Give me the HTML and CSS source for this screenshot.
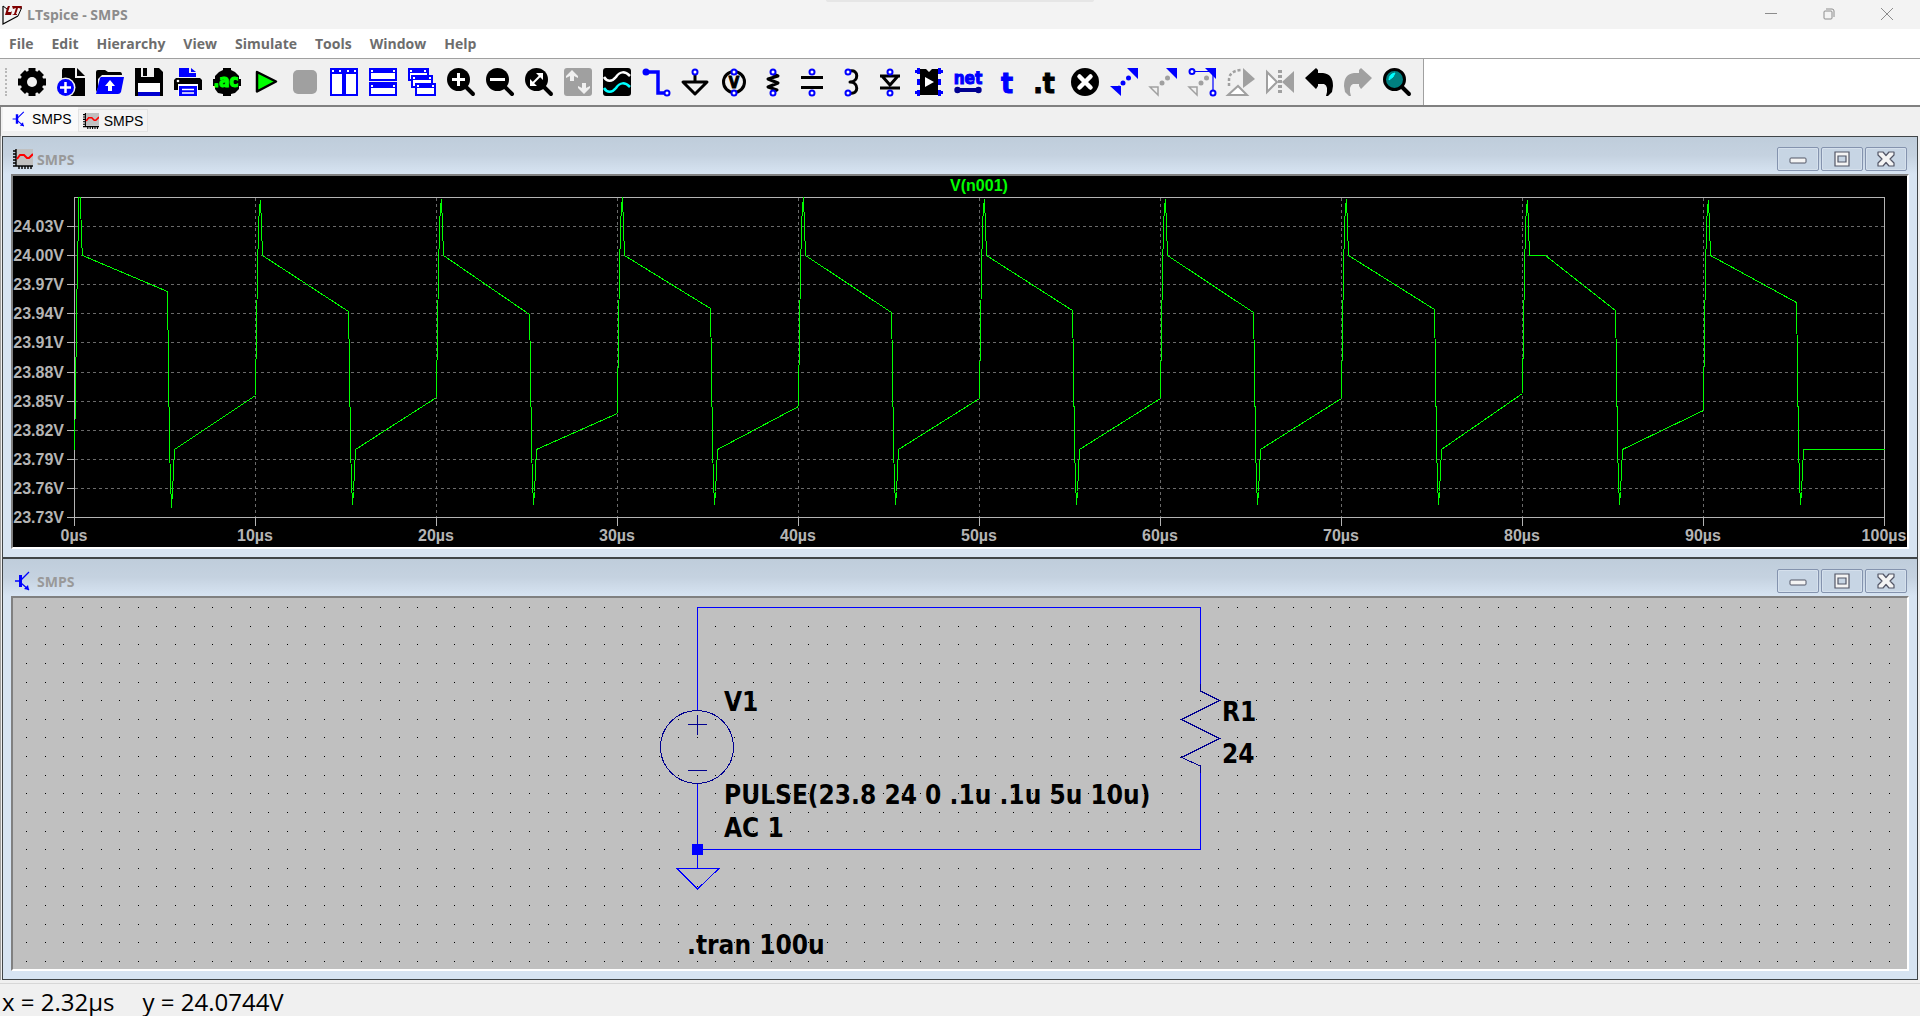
FILE: index.html
```html
<!DOCTYPE html>
<html lang="en">
<head>
    <meta charset="UTF-8">
    <meta name="viewport" content="width=device-width, initial-scale=1.0">
    <title>LTspice - SMPS</title>
    <link rel="stylesheet" href="styles.css">
</head>

<body>
    <!-- shared small icons -->
    <svg class="defs" width="0" height="0">
        <symbol id="icon-schematic" viewBox="0 0 20 20">
            <path d="M2 10H8M8 9L16 1M8 12L16 19" fill="none" stroke="#0000ff" stroke-width="1.3"/>
            <path d="M6 4h3v12h-3zM16 19l-5-1 4-4z" fill="#0000ff"/>
        </symbol>
        <symbol id="icon-plot" viewBox="0 0 20 20">
            <path d="M3 0H20V16H3z" fill="#c0c0c0"/>
            <path d="M3 0V17H20M0 2H3M0 5H3M0 8H3M0 11H3M0 14H3M0 17H3M6 17V20M9 17V20M12 17V20M15 17V20M18 17V20" fill="none" stroke="#000" stroke-width="1.4"/>
            <path d="M4 10L7 6H11L14 9H16L20 5" fill="none" stroke="#ff0000" stroke-width="2"/>
        </symbol>
        <symbol id="icon-min" viewBox="0 0 18 16">
            <rect x="1" y="7" width="16" height="5" rx="1" fill="#f4f4f4" stroke="#535666"/>
        </symbol>
        <symbol id="icon-max" viewBox="0 0 18 16">
            <path d="M2 1H16V15H2zM5 5V11H13V5z" fill="#f4f4f4" fill-rule="evenodd" stroke="#535666" stroke-width="1.2"/>
        </symbol>
        <symbol id="icon-close" viewBox="0 0 18 16">
            <path d="M1 1H6L9 4.500L12 1H17V4L13 8L17 12V15H12L9 11.500L6 15H1V12L5 8L1 4z" fill="#f4f4f4" stroke="#535666" stroke-width="1.2" stroke-linejoin="round"/>
        </symbol>
    </svg>

    <div class="app">
        <header class="title-bar">
            <svg class="logo" viewBox="0 0 20 20">
                <path d="M1 1V19L16 11" fill="none" stroke="#000" stroke-width="1.2"/>
                <path d="M1 1L5 4M16 11L20 2" fill="none" stroke="#000"/>
                <path d="M6 1H8L6 7H9L10 6L9 10H3L5 3zM10 1H20L19 4L17 3H16L14 9H15V10H10L12 9L14 3L11 4z" fill="#800000"/>
            </svg>
            <h1>LTspice - SMPS</h1>
            <div class="caption-buttons">
                <button aria-label="Minimize"><svg viewBox="0 0 12 12"><path d="M0 5.500H12"/></svg></button>
                <button aria-label="Restore"><svg viewBox="0 0 12 12"><rect x="1" y="3" width="8" height="8" rx="1"/><path d="M3 1H9Q11 1 11 3V9"/></svg></button>
                <button aria-label="Close"><svg viewBox="0 0 12 12"><path d="M0 0L12 12M12 0L0 12"/></svg></button>
            </div>
        </header>

        <nav class="menu-bar">
            <button>File</button>
            <button>Edit</button>
            <button>Hierarchy</button>
            <button>View</button>
            <button>Simulate</button>
            <button>Tools</button>
            <button>Window</button>
            <button>Help</button>
        </nav>

        <div class="toolbar-row">
            <div class="toolbar">
                <button aria-label="Settings"><svg viewBox="0 0 28 28">
                    <circle cx="14" cy="14" r="11.500"/>
                    <path d="M14 0V28M0 14H28M4.500 4.500L23.500 23.500M23.500 4.500L4.500 23.500" stroke="#000" stroke-width="7"/>
                    <circle cx="14" cy="14" r="5" fill="#f0f0f0"/>
                </svg></button>
                <button aria-label="New Schematic"><svg viewBox="0 0 28 28">
                    <path d="M6 0H18V10H28V28H5V2z"/><path d="M20 0L28 8H20z"/>
                    <circle cx="8.500" cy="19.500" r="10" fill="#f0f0f0"/><circle cx="8.500" cy="19.500" r="8.500" fill="#0000ff"/>
                    <path d="M8.500 14V25M3 19.500H14" stroke="#fff" stroke-width="2.500"/>
                </svg></button>
                <button aria-label="Open"><svg viewBox="0 0 28 28">
                    <path d="M0 4Q0 2 2 2H9L12 4H24Q26 4 26 7H6L2 11V20L0 24z"/>
                    <path d="M5 9H28L25 24Q24 26 22 26H0L4 10z" fill="#0000ff"/>
                    <path d="M14 12L19 18H16V23H12V18H9z" fill="#fff"/>
                </svg></button>
                <button aria-label="Save"><svg viewBox="0 0 28 28">
                    <path d="M0 0H24L28 4V28H0z"/>
                    <path d="M6 0H8V9H6zM12 0H19V9H8V8H12z" fill="#f0f0f0"/>
                    <path d="M3 15H25V25H3z" fill="#fff"/><path d="M3 24H25V28H3z" fill="#0000d0"/>
                </svg></button>
                <button aria-label="Print"><svg viewBox="0 0 28 28">
                    <path d="M5 0H15V5H22V9H5z" fill="#0000ff"/><path d="M17 0L22 4H17z" fill="#0000ff"/>
                    <path d="M2 10H26L28 12V22H0V12z"/><circle cx="4" cy="13" r="1.300" fill="#fff"/>
                    <path d="M4 16H24V28H4z" fill="#fff"/><path d="M5 18H23V28H5z" fill="#0000ff"/>
                    <path d="M8 21.500H20M8 25H20" stroke="#fff" stroke-width="1.500"/>
                </svg></button>
                <button aria-label="AC analysis"><svg viewBox="0 0 28 28">
                    <path d="M10 0H18V2L22 4L26 8V11H28V18H26V21L22 25L18 26V28H10V26L5 25L2 21V18H0V11H2V8L6 4L10 2z"/>
                    <text x="13" y="19" class="glyph-text" font-size="17" fill="#00ff00" stroke="#00ff00">.ac</text>
                </svg></button>
                <button aria-label="Run"><svg viewBox="0 0 28 28">
                    <path d="M5 4L24 13.500L5 23.500z" fill="#00ff00" stroke="#000" stroke-width="2.500" stroke-linejoin="round"/>
                </svg></button>
                <button aria-label="Stop" disabled><svg viewBox="0 0 28 28">
                    <rect x="2" y="2" width="24" height="24" rx="5" fill="#a0a0a0"/>
                </svg></button>
                <button aria-label="Tile Vertically"><svg viewBox="0 0 28 28">
                    <path d="M1 1H13V27H1zM15 1H27V27H15z" fill="#fff" stroke="#0000ff" stroke-width="2"/>
                    <path d="M0 0H13V6H0zM15 0H28V6H15z" fill="#0000ff"/>
                    <path d="M2 3H4M9 3H11M17 3H19M24 3H26" stroke="#fff" stroke-width="2"/>
                </svg></button>
                <button aria-label="Tile Horizontally"><svg viewBox="0 0 28 28">
                    <path d="M1 1H27V12H1zM1 15H27V27H1z" fill="#fff" stroke="#0000ff" stroke-width="2"/>
                    <path d="M0 0H28V5H0zM0 15H28V20H0z" fill="#0000ff"/>
                    <path d="M2 3H4M24 3H26M2 18H4M24 18H26" stroke="#fff" stroke-width="2"/>
                </svg></button>
                <button aria-label="Cascade"><svg viewBox="0 0 28 28">
                    <path d="M1 1H20V12H1z" fill="#fff" stroke="#0000ff" stroke-width="2"/><path d="M0 0H21V5H0z" fill="#0000ff"/>
                    <path d="M4 8H24V19H4z" fill="#fff" stroke="#0000ff" stroke-width="2"/><path d="M3 7H25V12H3z" fill="#0000ff"/>
                    <path d="M8 16H27V27H8z" fill="#fff" stroke="#0000ff" stroke-width="2"/><path d="M7 15H28V20H7z" fill="#0000ff"/>
                    <path d="M2 3H4M16 3H18M5 10H7M21 10H23M9 18H11M24 18H26" stroke="#fff" stroke-width="2"/>
                </svg></button>
                <button aria-label="Zoom in"><svg viewBox="0 0 28 28">
                    <circle cx="11.500" cy="11.500" r="11.500"/><path d="M18 18L26 26" class="handle"/>
                    <path d="M11.500 5V18M5 11.500H18" stroke="#fff" stroke-width="3"/>
                </svg></button>
                <button aria-label="Zoom out"><svg viewBox="0 0 28 28">
                    <circle cx="11.500" cy="11.500" r="11.500"/><path d="M18 18L26 26" class="handle"/>
                    <path d="M4 11.500H19" stroke="#fff" stroke-width="3"/>
                </svg></button>
                <button aria-label="Zoom to fit"><svg viewBox="0 0 28 28">
                    <circle cx="11.500" cy="11.500" r="11.500"/><path d="M18 18L26 26" class="handle"/>
                    <path d="M7 16L16 7" stroke="#fff" stroke-width="2"/>
                    <path d="M11 5H18V12zM5 11V18H12z" fill="#fff"/>
                </svg></button>
                <button aria-label="Autorange" disabled><svg viewBox="0 0 28 28">
                    <rect width="28" height="28" rx="3" fill="#a0a0a0"/>
                    <path d="M8 2L14 8V10L10 8V13H6V8L2 10V8zM20 26L14 20V18L18 20V15H22V20L26 18V20z" fill="#f0f0f0"/>
                </svg></button>
                <button aria-label="Plot traces"><svg viewBox="0 0 28 28">
                    <rect width="28" height="28" rx="3"/>
                    <path d="M1 9C4 14 9 14 13 9C17 3 22 3 27 8" fill="none" stroke="#fff" stroke-width="2.500"/>
                    <path d="M1 20C4 25 9 25 13 20C17 14 22 14 27 19" fill="none" stroke="#00ffff" stroke-width="2.500"/>
                </svg></button>
                <button aria-label="Wire"><svg viewBox="0 0 28 28">
                    <path d="M4 4H16V25H24" fill="none" stroke="#0000ff" stroke-width="3.500"/>
                    <circle cx="4" cy="4" r="3.500" fill="#0000ff"/><circle cx="25" cy="25" r="2.500" class="pin"/>
                </svg></button>
                <button aria-label="Ground"><svg viewBox="0 0 28 28">
                    <path d="M14 5V14M2 14H26L14 26z" class="stroke-black"/><circle cx="14" cy="4" r="2.500" class="pin"/>
                </svg></button>
                <button aria-label="Voltage source"><svg viewBox="0 0 28 28">
                    <circle cx="14" cy="14" r="10.500" class="stroke-black"/>
                    <text x="14" y="20" class="glyph-text" font-size="15" stroke="#000">V</text>
                    <circle cx="14" cy="4" r="2.500" class="pin"/><circle cx="14" cy="25" r="2.500" class="pin"/>
                </svg></button>
                <button aria-label="Resistor"><svg viewBox="0 0 28 28">
                    <path d="M14 6L19 8L9 11L19 15L9 19L18 22L14 24" class="stroke-black"/>
                    <circle cx="14" cy="4" r="2.500" class="pin"/><circle cx="14" cy="25" r="2.500" class="pin"/>
                </svg></button>
                <button aria-label="Capacitor"><svg viewBox="0 0 28 28">
                    <path d="M3 9.500H25M3 19.500H25" class="stroke-black"/>
                    <circle cx="14" cy="4" r="2.500" class="pin"/><circle cx="14" cy="25" r="2.500" class="pin"/>
                </svg></button>
                <button aria-label="Inductor"><svg viewBox="0 0 28 28">
                    <path d="M13 3C22 1 22 14 13 14C22 14 22 27 13 25" class="stroke-black"/>
                    <circle cx="11" cy="4" r="2.500" class="pin"/><circle cx="11" cy="25" r="2.500" class="pin"/>
                </svg></button>
                <button aria-label="Diode"><svg viewBox="0 0 28 28">
                    <path d="M4 8H24M6 8L14 17L22 8M4 20H24" class="stroke-black"/>
                    <circle cx="14" cy="4" r="2.500" class="pin"/><circle cx="14" cy="25" r="2.500" class="pin"/>
                </svg></button>
                <button aria-label="Component"><svg viewBox="0 0 28 28">
                    <path d="M2 0H5V6H2zM0 2H5V5H0zM2 11H5V17H2zM2 22H5V28H2zM0 23H5V26H0zM23 0H26V6H23zM23 2H28V5H23zM23 11H26V17H23zM23 22H26V28H23zM23 23H28V26H23z" fill="#0000ff"/>
                    <path d="M5 1H11L14 4L17 1H23V27H5z"/><path d="M10 9L19 14L10 19z" fill="#fff"/>
                </svg></button>
                <button aria-label="Net name"><svg viewBox="0 0 28 28">
                    <text x="14" y="16" class="glyph-text" font-size="17" fill="#0000ff" stroke="#0000ff">net</text>
                    <path d="M3 22H25" stroke="#000090" stroke-width="4"/>
                    <circle cx="3.500" cy="22" r="3.200" fill="#000090"/><circle cx="24.500" cy="22" r="3.200" fill="#000090"/>
                </svg></button>
                <button aria-label="Text"><svg viewBox="0 0 28 28">
                    <text x="14" y="25" class="glyph-text" font-size="28" fill="#0000ff" stroke="#0000ff">t</text>
                </svg></button>
                <button aria-label="SPICE directive"><svg viewBox="0 0 28 28">
                    <text x="12" y="25" class="glyph-text" font-size="28" stroke="#000">.t</text>
                </svg></button>
                <button aria-label="Delete"><svg viewBox="0 0 28 28">
                    <circle cx="14" cy="14" r="14"/><path d="M8.500 8.500L19.500 19.500M19.500 8.500L8.500 19.500" stroke="#fff" stroke-width="4.500" stroke-linecap="round"/>
                </svg></button>
                <button aria-label="Move"><svg viewBox="0 0 28 28" fill="#0000ff">
                    <path d="M17 0H28V11zM0 18H11V28z"/>
                    <circle cx="9" cy="19" r="1.500"/><circle cx="13" cy="15" r="2.500"/><circle cx="18.500" cy="10" r="2.500"/>
                </svg></button>
                <button aria-label="Duplicate"><svg viewBox="0 0 28 28">
                    <path d="M17 0H28V11z" fill="#0000ff"/><path d="M1 19H9V27z" fill="none" stroke="#a0a0a0" stroke-width="1.500"/>
                    <g fill="#a0a0a0"><circle cx="13" cy="15" r="2.500"/><circle cx="18.500" cy="10" r="2.500"/></g>
                </svg></button>
                <button aria-label="Stretch"><svg viewBox="0 0 28 28">
                    <path d="M17 0H28V11z" fill="#0000ff"/><path d="M1 19H9V27z" fill="none" stroke="#a0a0a0" stroke-width="1.500"/>
                    <g fill="#a0a0a0"><circle cx="13" cy="15" r="2.500"/><circle cx="18.500" cy="10" r="2.500"/></g>
                    <path d="M4 3.500H25V25" fill="none" stroke="#0000ff" stroke-width="1.200"/>
                    <circle cx="4" cy="3.500" r="2.500" class="pin"/><circle cx="25" cy="25" r="2.500" class="pin"/>
                </svg></button>
                <button aria-label="Rotate" disabled><svg viewBox="0 0 28 28">
                    <path d="M16 0L28 11L16 20z" fill="#a0a0a0"/>
                    <path d="M1 27H20L11 18z" fill="#fff" stroke="#a0a0a0" stroke-width="2"/>
                    <path d="M2 18V12Q2 3 14 2" fill="none" stroke="#a0a0a0" stroke-width="2.500" stroke-dasharray="3 2"/>
                </svg></button>
                <button aria-label="Mirror" disabled><svg viewBox="0 0 28 28">
                    <path d="M1 4V24L11 14z" fill="#fff" stroke="#a0a0a0" stroke-width="2"/>
                    <path d="M28 3V25L16 14z" fill="#a0a0a0"/><path d="M14 2V27" stroke="#a0a0a0" stroke-width="4" stroke-dasharray="3 2"/>
                </svg></button>
                <button aria-label="Undo"><svg viewBox="0 0 28 28">
                    <path d="M0 10L11 0L13 2V5H18Q28 6 28 18L27 24L23 28H21Q24 18 19 16H13V18L11 21z"/>
                </svg></button>
                <button aria-label="Redo" disabled><svg viewBox="0 0 28 28">
                    <path d="M28 10L17 0L15 2V5H10Q0 6 0 18L1 24L5 28H7Q4 18 9 16H15V18L17 21z" fill="#a0a0a0"/>
                </svg></button>
                <button aria-label="Find"><svg viewBox="0 0 28 28">
                    <circle cx="11.500" cy="11.500" r="10" fill="#008080" stroke="#000" stroke-width="3"/><path d="M19 19L26 26" class="handle"/>
                    <path d="M6 12Q6 6 12 5L10 9z" fill="#00ffff" stroke="#00ffff"/>
                </svg></button>
            </div>
        </div>

        <div class="tabs">
            <button class="tab active"><svg viewBox="0 0 20 20"><use href="#icon-schematic"/></svg>SMPS</button>
            <button class="tab"><svg viewBox="0 0 20 20"><use href="#icon-plot"/></svg>SMPS</button>
        </div>

        <main class="workspace">
            <section class="window">
                <div class="window-title">
                    <svg class="window-icon" viewBox="0 0 20 20"><use href="#icon-plot"/></svg>
                    <h2>SMPS</h2>
                    <div class="window-buttons">
                        <button aria-label="Minimize"><svg><use href="#icon-min"/></svg></button>
                        <button aria-label="Maximize"><svg><use href="#icon-max"/></svg></button>
                        <button aria-label="Close"><svg><use href="#icon-close"/></svg></button>
                    </div>
                </div>
                <div class="client">
                    <svg id="plot" class="plot" viewBox="0 1 1894 371">
                        <text class="trace-name" x="966" y="16">V(n001)</text>
                    </svg>
                </div>
            </section>

            <section class="window">
                <div class="window-title">
                    <svg class="window-icon" viewBox="0 0 20 20"><use href="#icon-schematic"/></svg>
                    <h2>SMPS</h2>
                    <div class="window-buttons">
                        <button aria-label="Minimize"><svg><use href="#icon-min"/></svg></button>
                        <button aria-label="Maximize"><svg><use href="#icon-max"/></svg></button>
                        <button aria-label="Close"><svg><use href="#icon-close"/></svg></button>
                    </div>
                </div>
                <div class="client">
                    <svg id="schematic" class="schematic" viewBox="0 1 1894 371">
                        <path id="grid" class="grid"/>
                        <!-- wires -->
                        <path class="wire" d="M684.500 113V10.500H1187.500V94M1187.500 169V252.500H684.500V187M684.500 252V271.500M664 271.500H706L684.500 292z"/>
                        <path d="M679 247H690V258H679z" fill="#0000ff"/>
                        <!-- V1 -->
                        <circle class="part" cx="684" cy="150" r="36.500"/>
                        <path class="part" d="M675 127.500H694M684.500 118V138M675 173.500H694"/>
                        <!-- R1 -->
                        <path class="part" d="M1187.500 87V94L1206.500 103.500L1168.500 122.500L1206.500 141.500L1168.500 160.500L1187.500 169V176"/>
                        <text x="711" y="114">V1</text>
                        <text x="711" y="207">PULSE(23.8 24 0 .1u .1u 5u 10u)</text>
                        <text x="711" y="240">AC 1</text>
                        <text x="1209" y="124">R1</text>
                        <text x="1209" y="166">24</text>
                        <text x="674" y="357">.tran 100u</text>
                    </svg>
                </div>
            </section>
        </main>

        <footer class="status-bar">
            <span>x = 2.32µs</span>
            <span>y = 24.0744V</span>
        </footer>
    </div>

    <script>
        const SVG = 'http://www.w3.org/2000/svg';
        const plot = document.getElementById('plot');

        // plot area inside the waveform pane
        const area = { left: 61, right: 1871, top: 22, bottom: 342 };

        function add(name, attrs, text) {
            const el = document.createElementNS(SVG, name);
            for (const key in attrs) el.setAttribute(key, attrs[key]);
            if (text) el.textContent = text;
            plot.appendChild(el);
        }

        function line(cls, x1, y1, x2, y2) {
            add('path', { class: cls, d: `M${x1 + 0.5} ${y1 + 0.5}L${x2 + 0.5} ${y2 + 0.5}` });
        }

        for (let i = 0; i <= 10; i++) {
            const y = Math.round(area.bottom - i * 29.1);
            if (i > 0) line('grid-line', area.left, y, area.right, y);
            line('axis', area.left - 8, y, area.left, y);
            add('text', { class: 'y-label', x: 51, y: y + 6 }, (23.73 + i * 0.03).toFixed(2) + 'V');
        }

        for (let i = 0; i <= 10; i++) {
            const x = area.left + i * 181;
            if (i > 0 && i < 10) line('grid-line', x, area.top, x, area.bottom);
            line('axis', x, area.bottom, x, area.bottom + 8);
            add('text', { class: 'x-label', x: x, y: area.bottom + 24 }, i * 10 + 'µs');
        }

        add('rect', { class: 'axis', x: area.left + 0.5, y: area.top + 0.5, width: area.right - area.left, height: area.bottom - area.top });

        // where each half period and each spike ends, in pane units
        const highEnd = [116, 136, 139, 133, 137, 135, 137, 134, 135, 127];
        const lowEnd = [220, 222, 238, 231, 223, 223, 223, 218, 235];
        const peak = [25, 24, 22, 22, 24, 24, 24, 25, 25];
        const points = [[61, 275], [62, 215], [63, 150], [64, 80], [65, 52], [65, 22], [67, 22], [68, 65], [69, 80]];
        for (let i = 0; i < 10; i++) {
            const x = area.left + i * 181;
            points.push([x + 93, highEnd[i]], [x + 94, 190], [x + 95, 270], [x + 96, 305], [x + 97, i === 0 ? 332 : 329], [x + 98, 316], [x + 100, 274]);
            if (i < 9) {
                const n = x + 181;
                points.push([n, lowEnd[i]], [n + 1, 150], [n + 2, 100], [n + 3, 50], [n + 4, 32], [n + 5, peak[i]], [n + 6, 50], [n + 7, 80]);
                if (i === 7) points.push([n + 23, 80]);
            }
        }
        points.push([1871, 274]);
        add('polyline', { class: 'trace', points: points.map(([x, y]) => `${x + 0.5},${y + 0.5}`).join(' ') });

        // schematic grid dots
        let dots = '';
        for (let row = 0; row < 20; row++) {
            for (let col = 0; col <= 100; col++) {
                dots += `M${Math.round(13 + col * 18.63)} ${Math.round(10 + row * 18.63)}h1v1h-1z`;
            }
        }
        document.getElementById('grid').setAttribute('d', dots);
    </script>
</body>
</html>
```
FILE: styles.css
```css
body {
    margin: 0;
    background: #f0f0f0;
    font-family: "Open Sans", "Noto Sans", sans-serif;
    color: #000;
}

button {
    margin: 0;
    padding: 0;
    border: none;
    background: none;
    font-family: inherit;
}

.defs {
    position: absolute;
}

.app {
    display: flex;
    flex-direction: column;
    min-height: 100vh;
}

/* main title bar */
.title-bar {
    position: relative;
    display: flex;
    align-items: center;
    height: 29px;
    padding: 0 4px 0 2px;
    background: #f3f3f3;
}

/* edge of the system snap bar hanging over the title bar */
.title-bar::after {
    content: "";
    position: absolute;
    top: 0;
    left: 43%;
    width: 14%;
    height: 2px;
    border-radius: 0 0 4px 4px;
    background: #e6e6e6;
}

.logo {
    width: 20px;
    height: 20px;
}

.title-bar h1 {
    flex: 1;
    margin: 0 0 0 5px;
    font-size: 14px;
    font-weight: 700;
    color: #8c8c8c;
}

.caption-buttons {
    display: flex;
}

.caption-buttons button {
    width: 58px;
    height: 28px;
}

.caption-buttons svg {
    width: 12px;
    height: 12px;
    fill: none;
    stroke: #8c8c8c;
    overflow: visible;
}

/* menu */
.menu-bar {
    display: flex;
    height: 29px;
    background: #fff;
    border-bottom: 1px solid #a0a0a0;
}

.menu-bar button {
    padding: 0 9px;
    font-size: 14px;
    font-weight: 700;
    color: #6d6d6d;
}

/* toolbar */
.toolbar-row {
    display: flex;
    background: #fff;
    border-bottom: 2px solid #808080;
}

.toolbar {
    display: flex;
    gap: 11px;
    padding: 9px 12px 9px 12px;
    background: #f0f0f0;
    border-right: 1px solid #a0a0a0;
}

.toolbar::before {
    content: "";
    width: 0;
    margin-left: -7px;
    border-left: 2px dotted #b8b8b8;
}

.toolbar button {
    width: 28px;
    height: 28px;
}

.toolbar svg {
    display: block;
    width: 28px;
    height: 28px;
    overflow: visible;
}

.handle {
    stroke: #000;
    stroke-width: 4;
    stroke-linecap: round;
}

.pin {
    fill: #fff;
    stroke: #0000ff;
    stroke-width: 2;
}

.stroke-black {
    fill: none;
    stroke: #000;
    stroke-width: 3;
    stroke-linejoin: round;
}

.glyph-text {
    font-family: "DejaVu Sans Condensed", "DejaVu Sans", sans-serif;
    font-weight: 700;
    text-anchor: middle;
}

/* document tabs */
.tabs {
    display: flex;
    align-items: flex-start;
    height: 29px;
    padding-left: 2px;
    border-left: 1px solid #808080;
    box-sizing: border-box;
}

.tab {
    display: flex;
    align-items: center;
    gap: 5px;
    height: 23px;
    margin-top: 2px;
    padding: 0 4px;
    border: 1px solid #e3e3e3;
    font-family: "Liberation Sans", Arial, sans-serif;
    font-size: 14px;
    background: #f4f4f4;
}

.tab.active {
    height: 24px;
    margin-top: 0;
    padding: 0 5px 0 7px;
    border-color: #fafafa;
    background: #fafafa;
}

.tab svg {
    width: 16px;
    height: 16px;
}

/* child windows */
.workspace {
    padding: 0 2px 0 1px;
    border-left: 1px solid #a0a0a0;
}

.window {
    padding: 0 8px 8px 8px;
    border: 1px solid #404548;
    background: #d7e4f2;
}

.window-title {
    display: flex;
    align-items: center;
    height: 37px;
    margin: 0 -8px;
    padding: 0 10px;
    background: linear-gradient(#bfcddb, #c5d2e0 50%, #d7e4f2);
}

.window-icon {
    width: 20px;
    height: 20px;
    margin-top: 7px;
}

.window-title h2 {
    flex: 1;
    margin: 7px 0 0 4px;
    font-size: 14px;
    font-weight: 700;
    color: #999;
}

.window-buttons {
    display: flex;
    gap: 2px;
    margin-top: 7px;
}

.window-buttons button {
    display: flex;
    align-items: center;
    justify-content: center;
    width: 42px;
    height: 24px;
    border: 1px solid #8493ae;
    border-radius: 2px;
    background: #c7d5e4;
    box-shadow: inset 0 0 0 1px #d5e0ec;
}

.window-buttons svg {
    width: 18px;
    height: 16px;
}

.client {
    border: 2px solid #fff;
    border-top-color: #808080;
    border-left-color: #808080;
}

.plot,
.schematic {
    display: block;
    width: 100%;
    height: auto;
    shape-rendering: crispEdges;
}

/* waveform pane */
.plot {
    background: #000;
    font-family: "Liberation Sans", Arial, sans-serif;
    font-size: 16px;
    font-weight: 700;
}

.plot text {
    fill: #b4b4b4;
}

.plot .trace-name {
    fill: #00ff00;
    text-anchor: middle;
}

.y-label {
    text-anchor: end;
}

.x-label {
    text-anchor: middle;
}

.axis {
    fill: none;
    stroke: #b4b4b4;
}

.grid-line {
    stroke: #6a6a6a;
    stroke-dasharray: 3 3;
}

.trace {
    fill: none;
    stroke: #00ff00;
}

/* schematic pane */
.schematic {
    background: #c0c0c0;
    font-family: "DejaVu Sans Condensed", "DejaVu Sans", sans-serif;
    font-size: 26px;
    font-weight: 700;
}

.wire {
    fill: none;
    stroke: #0000ff;
}

.part {
    fill: none;
    stroke: #000090;
}

.status-bar {
    display: flex;
    flex: 1;
    align-items: center;
    gap: 28px;
    margin-top: 3px;
    padding: 4px 2px 0 2px;
    border-top: 1px solid #d7d7d7;
    font-size: 24px;
    line-height: 28px;
}
```
